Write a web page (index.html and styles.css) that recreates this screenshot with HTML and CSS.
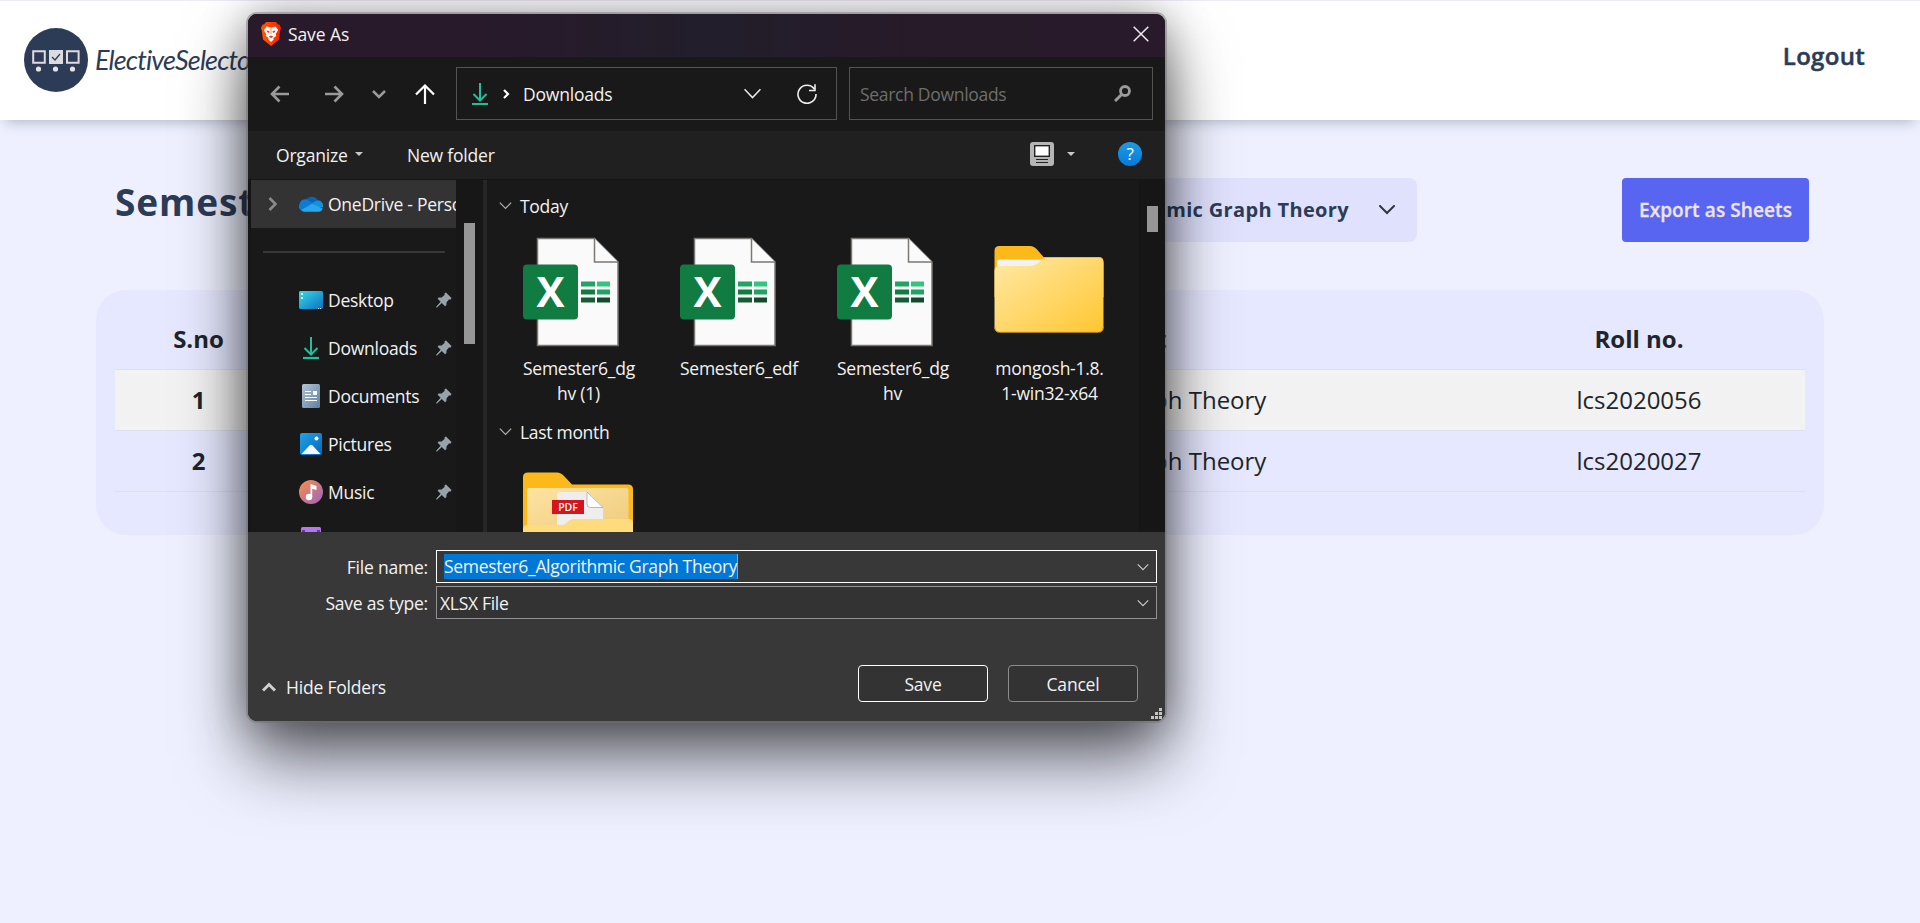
FILE: index.html
```html
<!DOCTYPE html>
<html lang="en">
<head>
<meta charset="utf-8">
<title>ElectiveSelector</title>
<link rel="stylesheet" href="styles.css">
</head>
<body>
<svg class="defs" aria-hidden="true">
  <defs>
    <linearGradient id="gold" x1="0" y1="0" x2="1" y2="1"><stop offset="0" stop-color="#ffe9a6"/><stop offset="1" stop-color="#ffc631"/></linearGradient>
    <linearGradient id="desk" x1="0" y1="0" x2="1" y2="1"><stop offset="0" stop-color="#35dbe6"/><stop offset="1" stop-color="#0f6fc4"/></linearGradient>
    <linearGradient id="docg" x1="0" y1="0" x2="1" y2="1"><stop offset="0" stop-color="#b4c4d6"/><stop offset="1" stop-color="#5e7f9f"/></linearGradient>
    <linearGradient id="blue" x1="0" y1="0" x2="1" y2="1"><stop offset="0" stop-color="#1fa3ea"/><stop offset="1" stop-color="#0668b8"/></linearGradient>
    <linearGradient id="mus" x1="0" y1="0" x2="1" y2="1"><stop offset="0" stop-color="#fb8f45"/><stop offset="1" stop-color="#9a63c4"/></linearGradient>
    <linearGradient id="brave" x1="0" y1="0" x2="1" y2="0"><stop offset="0" stop-color="#ff5a00"/><stop offset="1" stop-color="#ff2000"/></linearGradient>
    <linearGradient id="inner" x1="0" y1="0" x2="1" y2="1"><stop offset="0" stop-color="#fde3a2"/><stop offset="1" stop-color="#eecb7c"/></linearGradient>
    <symbol id="i-download" viewBox="0 0 16 24"><path d="M8 1v17M1.500 12 8 18.500 14.500 12" fill="none" stroke="#22c09a" stroke-width="2"/><path d="M0 22h16" stroke="#22c09a" stroke-width="2.200"/></symbol>
    <symbol id="i-pin" viewBox="0 0 16 16"><path d="M10 .5 15.500 6 14.600 7.500 13 7.500 10.600 10.300 10.300 13.200 9 14.200 5.800 11 .8 15.800 0 15 4.600 9.800 1.600 6.800 2.600 5.500 5.600 5.400 8.500 3 8.600 1.300Z" fill="#98a2ab"/></symbol>
    <symbol id="i-chev" viewBox="0 0 16 10"><path d="M1 1.500 8 8.500 15 1.500" fill="none" stroke="currentColor" stroke-width="1.600"/></symbol>
    <symbol id="i-excel" viewBox="0 0 96 110">
      <path d="M14.500 1.500h57L95 25v83.500H14.500Z" fill="#fafafa" stroke="#7b7875" stroke-width="1.500"/>
      <path d="M71.500 1.500V25H95" fill="#fafafa" stroke="#7b7875" stroke-width="1.500"/>
      <path d="M58 44.500h14v5H58Z" fill="#21a366"/><path d="M74 44.500h13v5H74Z" fill="#33c481"/>
      <path d="M58 52.500h14v5H58Z" fill="#107c41"/><path d="M74 52.500h13v5H74Z" fill="#21a366"/>
      <path d="M58 60.500h14v5H58Z" fill="#185c37"/><path d="M74 60.500h13v5H74Z" fill="#134a2c"/>
      <rect x="0" y="27.500" width="55" height="55" rx="4" fill="#107c41"/>
      <text x="27.500" y="70" class="xl-mark" text-anchor="middle">X</text>
    </symbol>
  </defs>
</svg>

<header class="topbar">
  <a class="brand">
    <svg class="brand-mark" viewBox="0 0 64 64"><circle cx="32" cy="32" r="32" fill="#2c3c57"/><path d="M9.200 23.200h11.600v11.600H9.200ZM43 23.200h11.600v11.600H43Z" fill="none" stroke="#e3d9de" stroke-width="2"/><path d="M25 22h14v14H25Z" fill="#dcdcdc"/><path d="m28 29 3 3 5-6" fill="none" stroke="#2c3c57" stroke-width="1.300"/><g fill="#e6e2e4"><circle cx="14.500" cy="41" r="2.600"/><circle cx="31.500" cy="41" r="2.600"/><circle cx="48.500" cy="41" r="2.600"/></g></svg>
    <span class="brand-name">ElectiveSelector</span>
  </a>
  <a class="logout">Logout</a>
</header>

<main class="page">
  <div class="page-head">
    <h1>Semester 6</h1>
    <div class="subject-select"><span>Algorithmic Graph Theory</span><svg viewBox="0 0 16 10"><path d="M1 1 8 8 15 1" fill="none" stroke="#33363d" stroke-width="2" stroke-linecap="round"/></svg></div>
    <button class="export">Export as Sheets</button>
  </div>
  <section class="card">
    <table class="students">
      <colgroup><col class="c-sno"><col class="c-name"><col class="c-subject"><col class="c-roll"></colgroup>
      <thead><tr><th>S.no</th><th></th><th>Subject</th><th>Roll no.</th></tr></thead>
      <tbody>
        <tr class="striped"><th>1</th><td></td><td>Algorithmic Graph Theory</td><td>lcs2020056</td></tr>
        <tr><th>2</th><td></td><td>Algorithmic Graph Theory</td><td>lcs2020027</td></tr>
      </tbody>
    </table>
  </section>
</main>

<div class="dialog" role="dialog">
  <div class="titlebar">
    <svg class="brave" viewBox="0 0 20 24"><path d="M5 0h10l2 2.500h1.500L20 6l-.7 2L18 17.500 10 24 2 17.500.7 8 0 6l1.500-3.500H3Z" fill="url(#brave)"/><path d="M5.500 4.500 10 5.500l4.500-1 2.700 3.500-2.400 4 .4 2-2.800 2 .3 1.600L10 20l-2.700-2.400.3-1.600-2.800-2 .4-2-2.400-4Z" fill="#fff"/><path d="M5.500 8.500 8.500 9 8 11 6.300 10.300ZM14.500 8.500 11.500 9 12 11 13.700 10.300ZM7.800 14.500l2.200-1 2.200 1L10 16.300ZM9.700 6h.6v6h-.6Z" fill="#ff3c00"/></svg>
    <span class="title">Save As</span>
    <svg class="close" viewBox="0 0 16 16"><path d="m.7.7 14.600 14.600M15.300.7.7 15.300" stroke="#f0e8ee" stroke-width="1.500"/></svg>
  </div>

  <div class="nav">
    <span class="n-back"><svg width="20" height="18" viewBox="0 0 20 18"><path d="M19 9H2M9.500 1.500 2 9l7.500 7.500" fill="none" stroke="#9a9a9a" stroke-width="2.600"/></svg></span>
    <span class="n-fwd"><svg width="20" height="18" viewBox="0 0 20 18"><path d="M1 9h17M10.500 1.500 18 9l-7.500 7.500" fill="none" stroke="#9a9a9a" stroke-width="2.600"/></svg></span>
    <span class="n-hist"><svg width="14" height="10" viewBox="0 0 14 10"><path d="m1 2 6 6 6-6" fill="none" stroke="#9a9a9a" stroke-width="2.500"/></svg></span>
    <span class="n-up"><svg width="20" height="20" viewBox="0 0 20 20"><path d="M10 20V1.500M1 10.500l9-9 9 9" fill="none" stroke="#fff" stroke-width="2.200"/></svg></span>
    <div class="address">
      <svg class="a-dl"><use href="#i-download"/></svg>
      <svg class="a-sep" viewBox="0 0 7 10"><path d="m1 1 4 4-4 4" fill="none" stroke="#fff" stroke-width="2.200"/></svg>
      <span class="a-name">Downloads</span>
      <svg class="a-chev" viewBox="0 0 16 10"><path d="M.5 1 8 8.800 15.500 1" fill="none" stroke="#e6e6e6" stroke-width="1.500"/></svg>
      <svg class="a-refresh" viewBox="0 0 20 20"><path d="M17.300 5A9 9 0 1 0 19 10M18 .3V6.500H12" fill="none" stroke="#eee" stroke-width="1.600"/></svg>
    </div>
    <div class="search"><span>Search Downloads</span><svg viewBox="0 0 17 17"><circle cx="11" cy="6" r="4.500" fill="none" stroke="#9a9a9a" stroke-width="2.800"/><path d="M7.800 9.200 1 16" stroke="#9a9a9a" stroke-width="3"/></svg></div>
  </div>

  <div class="toolbar">
    <span class="t-org">Organize</span><i class="caret"></i><span class="t-new">New folder</span>
    <svg class="t-view" viewBox="0 0 24 24"><rect width="24" height="24" rx="3" fill="#b5b5b5"/><rect x="4.700" y="3.700" width="14.600" height="10.600" fill="#fff" stroke="#222" stroke-width="1.400"/><path d="M6 17.500h12M6 20.500h12" stroke="#222" stroke-width="1.200"/></svg>
    <i class="caret c2"></i>
    <span class="help">?</span>
  </div>

  <div class="body">
    <div class="tree">
      <div class="node onedrive">
        <svg class="expand" viewBox="0 0 9 14"><path d="m1.500 1 6 6-6 6" fill="none" stroke="#8b8b8b" stroke-width="2.600"/></svg>
        <span class="ic"><svg width="24" height="16" viewBox="0 0 24 16"><path d="M6.500 4.500A7 7 0 0 1 19 4.700L12 10Z" fill="#0364b8"/><path d="M5 15.500A5 5 0 0 1 .5 8 5.500 5.500 0 0 1 9 4.200L15 8 6 15.500Z" fill="#0f7ad4"/><path d="M12.500 7.500 17.500 4.500A5.500 5.500 0 0 1 24 11L18 12Z" fill="#1490df"/><path d="M2.300 14 13 7.800 23.700 12.500A4.500 4.500 0 0 1 20 15.800H5.500Q3.500 15.500 2.300 14Z" fill="#28a8ea"/></svg></span>
        <span class="lbl">OneDrive - Personal</span>
      </div>
      <div class="rule"></div>
      <div class="node"><span class="ic"><svg width="24" height="18" viewBox="0 0 24 18"><rect width="24" height="18" rx="1.500" fill="url(#desk)"/><path d="M2 2h2v2H2ZM2 6h2v2H2ZM19 17h1v1h-1ZM21 17h1v1h-1Z" fill="#fff"/></svg></span><span class="lbl">Desktop</span><svg class="pin"><use href="#i-pin"/></svg></div>
      <div class="node"><span class="ic"><svg width="16" height="24"><use href="#i-download"/></svg></span><span class="lbl">Downloads</span><svg class="pin"><use href="#i-pin"/></svg></div>
      <div class="node"><span class="ic"><svg width="18" height="24" viewBox="0 0 18 24"><rect width="18" height="24" rx="1.500" fill="url(#docg)"/><path d="M3 7.500h6M3 10.500h6M3 13.500h12M3 16.500h12" stroke="#fff" stroke-width="1.100"/><path d="M11 7h4v4h-4Z" fill="#fff"/></svg></span><span class="lbl">Documents</span><svg class="pin"><use href="#i-pin"/></svg></div>
      <div class="node"><span class="ic"><svg width="22" height="22" viewBox="0 0 22 22"><rect width="22" height="22" rx="2" fill="url(#blue)"/><path d="M1.500 21 9.500 12.500Q11 11 12.500 12.500L20.500 21Z" fill="#f4f8fd"/><circle cx="16.500" cy="5.500" r="2" fill="#fff"/></svg></span><span class="lbl">Pictures</span><svg class="pin"><use href="#i-pin"/></svg></div>
      <div class="node"><span class="ic"><svg width="24" height="24" viewBox="0 0 24 24"><circle cx="12" cy="12" r="12" fill="url(#mus)"/><circle cx="10" cy="17" r="3.200" fill="#fff"/><path d="M11.500 17V4l6 2v4l-4.300-1.200V17Z" fill="#fff"/></svg></span><span class="lbl">Music</span><svg class="pin"><use href="#i-pin"/></svg></div>
      <div class="node"><span class="ic"><svg width="20" height="26" viewBox="0 0 20 26"><rect width="20" height="26" rx="1.500" fill="#b478f2"/><path d="M1 3h3v3H1ZM16 3h3v3h-3Z" fill="#6a3a9e"/></svg></span></div>
    </div>
    <div class="tree-scroll"><i></i></div>
    <div class="files">
      <div class="group g1"><svg><use href="#i-chev"/></svg>Today</div>
      <div class="grid">
        <div class="file"><svg class="xl"><use href="#i-excel"/></svg><span>Semester6_dg<br>hv (1)</span></div>
        <div class="file"><svg class="xl"><use href="#i-excel"/></svg><span>Semester6_edf</span></div>
        <div class="file"><svg class="xl"><use href="#i-excel"/></svg><span>Semester6_dg<br>hv</span></div>
        <div class="file"><svg class="folder" viewBox="0 0 110 110"><path d="M.5 14Q.5 9 5.500 9H36Q40 9 43 12.500L49.500 20H105Q109.500 20 109.500 25V60H.5Z" fill="#fdb91a"/><path d="M3 50V25Q3 22.500 6 22.500H50L42 32Z" fill="#f2f2f2"/><path d="M.5 34Q.5 29 5.500 29H37Q41 29 44 26L48 22.500Q49.500 21 53 21H105Q109.500 21 109.500 26V90Q109.500 95 104.500 95H5.500Q.5 95 .5 90Z" fill="url(#gold)"/><path d="M.7 90Q1 95.300 5.500 95.300H104.500Q109 95.300 109.300 90" fill="none" stroke="#c99522" stroke-width="1"/></svg><span>mongosh-1.8.<br>1-win32-x64</span></div>
      </div>
      <div class="group g2"><svg><use href="#i-chev"/></svg>Last month</div>
      <svg class="folder2" viewBox="0 0 110 60"><path d="M0 5Q0 .5 5 .5H34Q38 .5 41 4L49 12.500H105Q110 12.500 110 17V60H0Z" fill="#fcb91b"/><path d="M4 18Q4 16 6 16H103Q105.500 16 105.500 18V60H4Z" fill="url(#inner)"/><path d="M34 23Q34 20 37 20H65L80 35V60H34Z" fill="#eee"/><path d="M64 20V32Q64 35.500 67.500 35.500H80Z" fill="#fff" stroke="#aaa" stroke-width=".8"/><path d="M29 28h32v14H29Z" fill="#d2151f"/><text x="45" y="39" class="pdf" text-anchor="middle">PDF</text><path d="M0 57Q0 53 5 53H38Q41 53 44 50.500Q47 47 51 47H105Q110 47 110 51V60H0Z" fill="#fedb7c"/></svg>
    </div>
    <div class="file-scroll"><i></i></div>
  </div>

  <div class="footer">
    <div class="field"><label>File name:</label><div class="combo focus"><span class="sel">Semester6_Algorithmic Graph Theory</span><svg><use href="#i-chev"/></svg></div></div>
    <div class="field"><label>Save as type:</label><div class="combo"><span>XLSX File</span><svg><use href="#i-chev"/></svg></div></div>
    <div class="actions">
      <svg class="up" viewBox="0 0 14 10"><path d="M1 8.500 7 2.500 13 8.500" fill="none" stroke="#d0d0d0" stroke-width="3"/></svg>
      <span class="hide">Hide Folders</span>
      <button class="btn primary">Save</button>
      <button class="btn">Cancel</button>
    </div>
    <svg class="grip" viewBox="0 0 11 11"><path d="M8 0h3v3H8ZM4 4h3v3H4ZM8 4h3v3H8ZM0 8h3v3H0ZM4 8h3v3H4ZM8 8h3v3H8Z" fill="#c4c4c4"/></svg>
  </div>
</div>
</body>
</html>
```
FILE: styles.css
```css
* { box-sizing: border-box; }
body { margin: 0; height: 923px; overflow: hidden; background: #eef0ff; font-family: "Open Sans", sans-serif; color: #212529; }
svg { display: block; flex: none; }
.defs { position: absolute; width: 0; height: 0; }

.topbar { height: 120px; background: #fff; border-top: 1px solid #eeebf8; box-shadow: 0 8px 12px -6px rgba(40, 45, 70, .3); display: flex; align-items: center; justify-content: space-between; padding: 0 55px 1px 24px; position: relative; }
.brand { display: flex; align-items: center; gap: 7px; }
.brand-mark { width: 64px; height: 64px; }
.brand-name { font: italic 400 27px/40px "Lato", sans-serif; color: #2c3c57; letter-spacing: -.850px; white-space: nowrap; }
.logout { font-size: 24px; font-weight: 600; letter-spacing: .3px; color: #2c3c57; padding-bottom: 9px; -webkit-text-stroke: .5px #2c3c57; }

.page { padding: 58px 96px 0; }
.page-head { display: flex; height: 64px; align-items: center; padding: 0 15px 0 19px; }
.page-head h1 { margin: 0; padding-bottom: 17px; font-size: 37px; font-weight: 700; color: #2c3c57; letter-spacing: .9px; flex: 1; }
.subject-select { height: 64px; width: 400px; background: #e0e2fd; border-radius: 8px; display: flex; align-items: center; justify-content: flex-end; gap: 30px; padding-right: 22px; font-size: 20px; font-weight: 700; color: #2c3c57; letter-spacing: .35px; margin-right: 205px; white-space: nowrap; }
.subject-select svg { width: 16px; height: 10px; }
.subject-select span { padding-bottom: 1px; }
.export { width: 187px; height: 64px; border: 0; border-radius: 4px; background: #5865f0; color: #f0e2ee; font: 600 19px "Open Sans", sans-serif; letter-spacing: .1px; padding: 0 0 1px; white-space: nowrap; -webkit-text-stroke: .3px #f0e2ee; }
.card { margin-top: 48px; height: 245px; border-radius: 30px; background: #e6e8ff; padding: 18px 19px 0; }
.students { width: 1690px; table-layout: fixed; border-collapse: collapse; font-size: 24px; text-align: center; }
.students th, .students td { height: 61px; padding: 0; border-bottom: 1px solid #dee1ea; }
.students .striped > * { background: #f2f2f2; }
.c-sno { width: 167px; } .c-name { width: 490px; } .c-subject { width: 701px; } .c-roll { width: 332px; }

.dialog { position: absolute; left: 248px; top: 14px; width: 917px; height: 707px; border-radius: 9px; overflow: hidden; background: #191919; color: #f2f2f2; font-size: 17.500px; box-shadow: 0 0 0 2px rgba(110, 110, 115, .45), 0 2px 44px rgba(0, 0, 0, .36), 0 38px 68px rgba(0, 0, 0, .58); display: flex; flex-direction: column; letter-spacing: -.3px; white-space: nowrap; }
.titlebar { height: 43px; display: flex; align-items: center; padding: 0 16px 4px 13px; background: linear-gradient(90deg, #281a2a 0, #281a2a 25%, #221e2b 50%, #271a29 75%, #291a2b); }
.brave { width: 20px; height: 24px; }
.title { margin: 1px 0 0 7px; flex: 1; letter-spacing: -.1px; }
.close { width: 16px; height: 16px; margin-top: 1px; }

.nav { height: 74px; display: flex; align-items: center; padding: 0 0 1px 5px; }
.nav > span { display: flex; justify-content: center; }
.n-back, .n-fwd { width: 54px; } .n-hist { width: 35px; } .n-up { width: 58px; margin-right: 2px; }
.address { width: 381px; height: 53px; border: 1px solid #535353; display: flex; align-items: center; padding-left: 15px; }
.a-dl { width: 16px; height: 24px; }
.a-sep { width: 7px; height: 10px; margin-left: 15px; }
.a-name { margin-left: 13px; width: 221px; letter-spacing: -.2px; }
.a-chev { width: 17px; height: 11px; }
.a-refresh { width: 20px; height: 20px; margin-left: 36px; }
.search { width: 304px; height: 53px; margin-left: 12px; border: 1px solid #535353; display: flex; align-items: center; justify-content: space-between; padding: 0 21px 0 10px; color: #6e6e6e; }
.search svg { width: 17px; height: 17px; }

.toolbar { height: 48px; background: #202020; display: flex; align-items: center; padding-left: 28px; letter-spacing: -.2px; }
.t-org { width: 79px; }
.caret { border: 4.500px solid transparent; border-top-color: #c8c8c8; border-bottom: 0; margin-bottom: 2px; }
.t-new { margin-left: 44px; flex: 1; }
.t-view { width: 24px; height: 24px; margin-bottom: 2px; }
.caret.c2 { margin: 0 43px 2px 13px; }
.help { width: 24px; height: 24px; margin: 0 23px 2px 0; border-radius: 50%; background: linear-gradient(#1c9ae6, #0a7ad6); text-align: center; font-size: 17px; line-height: 24px; color: #fff; }

.body { height: 353px; display: flex; overflow: hidden; border-top: 1px solid #151515; }
.tree { width: 208px; border-left: 3px solid #151515; overflow: hidden; flex: none; }
.node { height: 48px; display: flex; align-items: center; padding-left: 48px; letter-spacing: -.25px; }
.onedrive { background: #333; padding-left: 17px; }
.expand { width: 9px; height: 14px; margin-right: 22px; }
.ic { width: 24px; display: flex; justify-content: center; margin-right: 5px; flex: none; }
.lbl { width: 108px; flex: none; overflow: visible; }
.pin { width: 16px; height: 16px; }
.rule { height: 2px; background: #383838; margin: 23px 11px 23px 12px; }
.tree-scroll { width: 31px; flex: none; background: #171717; border-right: 4px solid #262626; padding: 43px 0 0 8px; }
.tree-scroll i { display: block; width: 11px; height: 121px; background: #969696; }
.files { flex: 1; padding-left: 12px; min-width: 0; }
.file-scroll { width: 26px; background: #161616; padding: 26px 0 0 8px; }
.file-scroll i { display: block; width: 11px; height: 26px; background: #969696; }
.group { display: flex; align-items: center; gap: 8px; height: 26px; }
.group svg { width: 13px; height: 9px; color: #aaa; margin-bottom: 2px; }
.g1 { margin-top: 13px; } .g2 { margin-top: 12px; }
.grid { display: flex; margin-top: 18px; height: 170px; }
.file { width: 157px; text-align: center; line-height: 25px; padding-left: 24px; flex: none; }
.file span { display: block; width: 111px; margin-top: 9px; letter-spacing: -.25px; }
.xl { width: 96px; height: 110px; }
.xl-mark { font: 700 42px "Open Sans", sans-serif; fill: #fff; letter-spacing: 0; }
.folder { width: 110px; height: 110px; }
.folder2 { width: 110px; height: 60px; margin: 27px 0 0 24px; }
.pdf { font: 600 10.500px "Open Sans", sans-serif; fill: #fff; letter-spacing: 0; }

.footer { position: relative; height: 189px; background: #383838; padding: 18px 8px 0 0; }
.field { display: flex; height: 33px; margin-bottom: 3px; align-items: center; }
.field label { width: 180px; text-align: right; margin: 1px 8px 0 0; flex: none; letter-spacing: -.2px; }
.combo { flex: 1; height: 33px; border: 1px solid #919191; background: #333; display: flex; align-items: center; justify-content: space-between; padding: 0 7px 0 3px; }
.combo.focus { border-color: #fff; background: #383838; padding-left: 7px; }
.combo svg { width: 12px; height: 8px; color: #c8c8c8; }
.sel { background: #0078d7; border-right: 1px solid #ff8728; height: 25px; line-height: 24px; letter-spacing: -.33px; }
.actions { display: flex; align-items: center; margin-top: 45px; padding: 0 19px 0 14px; height: 38px; }
.up { width: 14px; height: 10px; margin-top: 7px; }
.hide { margin: 8px 0 0 10px; flex: 1; letter-spacing: -.2px; }
.btn { width: 130px; height: 37px; border: 1px solid #8c8c8c; border-radius: 4px; background: #333; color: #f2f2f2; font: 17.500px "Open Sans", sans-serif; letter-spacing: -.2px; margin-left: 20px; padding: 2px 0 0; }
.btn.primary { border-color: #fff; }
.grip { position: absolute; right: 3px; bottom: 2px; width: 11px; height: 11px; }
```
